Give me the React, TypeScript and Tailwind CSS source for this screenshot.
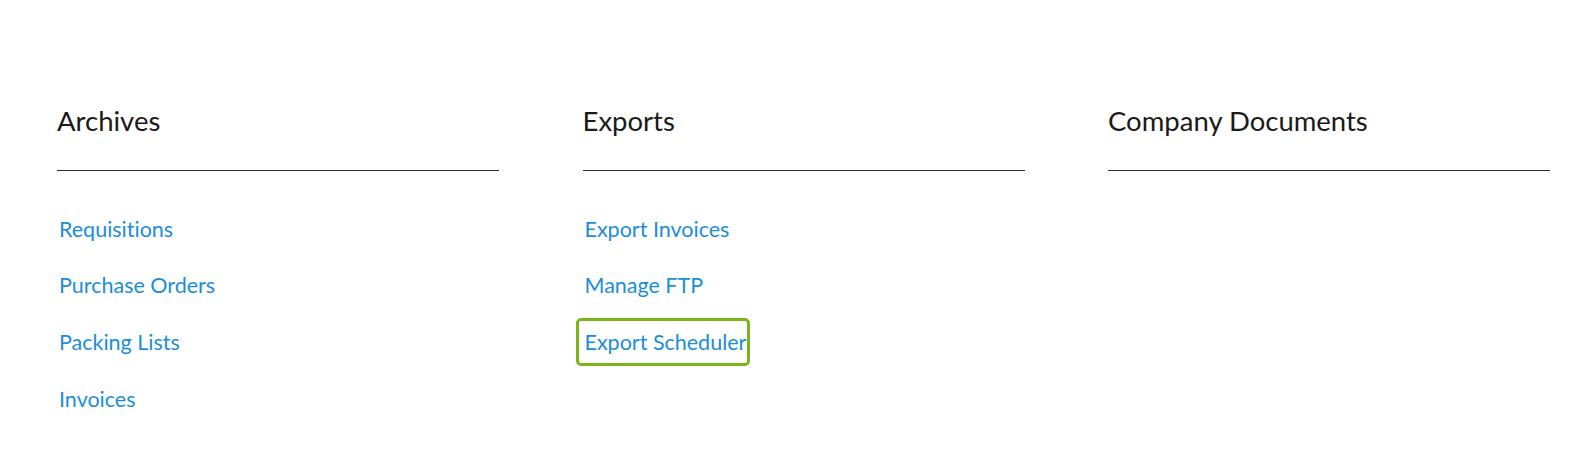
const sections = [
  { title: "Archives", links: ["Requisitions", "Purchase Orders", "Packing Lists", "Invoices"] },
  { title: "Exports", links: ["Export Invoices", "Manage FTP", "Export Scheduler"] },
  { title: "Company Documents", links: [] as string[] },
];

export default function App() {
  return (
    <div className="min-h-screen bg-white font-['Lato',sans-serif] [font-variant-ligatures:none] pl-[57px] pt-[105px]">
      <div className="flex gap-[83.5px]">
        {sections.map((s) => (
          <div key={s.title} className="w-[442px]">
            <h2 className="text-[27.5px] leading-[32px] text-[#1a1a1a]">{s.title}</h2>
            <div className="mt-[33px] h-px bg-[#2d2d2d]" />
            <ul className="mt-[45.5px] flex flex-col">
              {s.links.map((l) => (
                <li key={l} className="h-[56.7px]">
                  {l === "Export Scheduler" ? (
                    <a className="-ml-[7px] -mt-[12px] inline-block rounded-[5px] border-[3px] border-[#7cb41b] pl-[6px] pr-[1px] py-[9px] text-[21.5px] leading-[24px] text-[#1c8ed8]">
                      {l}
                    </a>
                  ) : (
                    <a className="ml-[2px] inline-block text-[21.5px] leading-[24px] text-[#1c8ed8]">{l}</a>
                  )}
                </li>
              ))}
            </ul>
          </div>
        ))}
      </div>
    </div>
  );
}
